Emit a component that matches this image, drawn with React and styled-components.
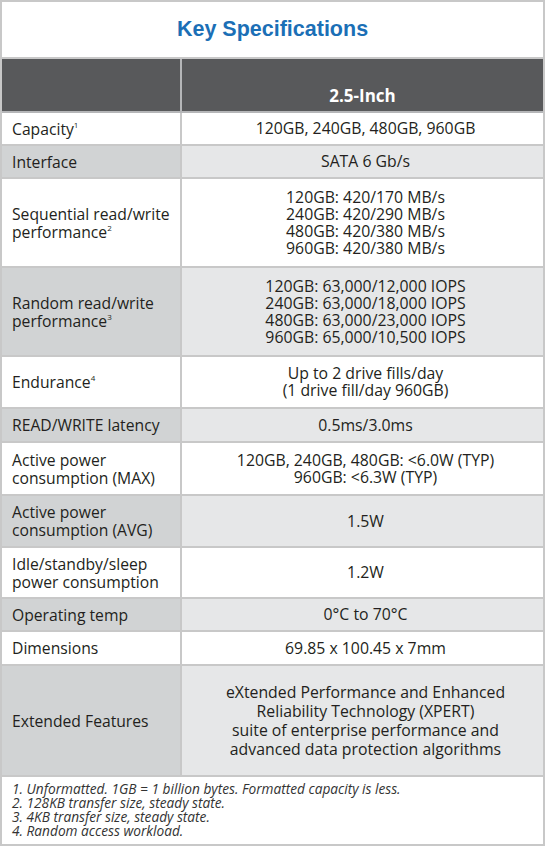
import React from "react";
import styled, { createGlobalStyle } from "styled-components";

const GlobalStyle = createGlobalStyle`
  html, body {
    margin: 0;
    padding: 0;
    background: #ffffff;
  }
  body {
    font-family: "Open Sans", "Noto Sans", sans-serif;
    color: #231f20;
  }
`;

const Sheet = styled.div`
  width: 545px;
  height: 846px;
  box-sizing: border-box;
  border: 2px solid #c8c8c8;
  display: flex;
  flex-direction: column;
`;

const Title = styled.h1`
  margin: 0;
  height: 55px;
  border-bottom: 2px solid #c8c8c8;
  display: flex;
  align-items: center;
  justify-content: center;
  font-family: "Liberation Sans", Arial, sans-serif;
  font-weight: 700;
  font-size: 21.5px;
  color: #1b6fb6;
`;

const Row = styled.div`
  display: grid;
  grid-template-columns: 180px 1fr;
  height: ${(props) => props.$h}px;
  box-sizing: border-box;
  border-bottom: 2px solid #c8c8c8;
`;

const HeaderRow = styled(Row)`
  background: #58595b;
  border-bottom-color: #b5b6b8;
`;

const HeaderCell = styled.div`
  border-right: 2px solid #b5b6b8;
  &:last-child {
    border-right: none;
  }
  display: flex;
  align-items: flex-end;
  justify-content: center;
  padding-bottom: 4px;
  color: #ffffff;
  font-weight: 700;
  font-size: 17px;
`;

const Label = styled.div`
  box-sizing: border-box;
  border-right: 2px solid #c8c8c8;
  background: ${(props) => (props.$shade ? "#d1d3d4" : "#ffffff")};
  display: flex;
  align-items: center;
  padding: 0 6px 0 10px;
  font-size: 15.7px;
  line-height: 18px;
`;

const Value = styled.div`
  background: ${(props) => (props.$shade ? "#e6e7e8" : "#ffffff")};
  display: flex;
  align-items: center;
  justify-content: center;
  text-align: center;
  font-size: 15.8px;
  line-height: ${(props) => props.$lh || 17}px;
  padding-left: 6px;
`;

const Sup = styled.sup`
  font-size: 8px;
  line-height: 0;
  vertical-align: 7px;
`;

const Notes = styled.div`
  flex: 1;
  padding: 5px 10px 0 10px;
  font-style: italic;
  font-size: 13.7px;
  line-height: 14px;
  color: #333;
`;

const rows = [
  { label: ["Capacity", "1"], value: ["120GB, 240GB, 480GB, 960GB"], h: 33 },
  { label: ["Interface"], value: ["SATA 6 Gb/s"], h: 33, shade: true },
  {
    label: ["Sequential read/write performance", "2"],
    value: [
      "120GB: 420/170 MB/s",
      "240GB: 420/290 MB/s",
      "480GB: 420/380 MB/s",
      "960GB: 420/380 MB/s",
    ],
    h: 89,
  },
  {
    label: ["Random read/write performance", "3"],
    value: [
      "120GB: 63,000/12,000 IOPS",
      "240GB: 63,000/18,000 IOPS",
      "480GB: 63,000/23,000 IOPS",
      "960GB: 65,000/10,500 IOPS",
    ],
    h: 89,
    shade: true,
  },
  {
    label: ["Endurance", "4"],
    value: ["Up to 2 drive fills/day", "(1 drive fill/day 960GB)"],
    h: 52,
  },
  { label: ["READ/WRITE latency"], value: ["0.5ms/3.0ms"], h: 34, shade: true },
  {
    label: ["Active power consumption (MAX)"],
    value: ["120GB, 240GB, 480GB: <6.0W (TYP)", "960GB: <6.3W (TYP)"],
    h: 53,
  },
  {
    label: ["Active power consumption (AVG)"],
    value: ["1.5W"],
    h: 52,
    shade: true,
  },
  {
    label: ["Idle/standby/sleep power consumption"],
    value: ["1.2W"],
    h: 51,
  },
  { label: ["Operating temp"], value: ["0°C to 70°C"], h: 33, shade: true },
  { label: ["Dimensions"], value: ["69.85 x 100.45 x 7mm"], h: 34 },
  {
    label: ["Extended Features"],
    value: [
      "eXtended Performance and Enhanced",
      "Reliability Technology (XPERT)",
      "suite of enterprise performance and",
      "advanced data protection algorithms",
    ],
    h: 111,
    shade: true,
    lh: 19,
  },
];

const notes = [
  "1. Unformatted. 1GB = 1 billion bytes. Formatted capacity is less.",
  "2. 128KB transfer size, steady state.",
  "3. 4KB transfer size, steady state.",
  "4. Random access workload.",
];

const App = () => (
  <>
    <GlobalStyle />
    <Sheet>
      <Title>Key Specifications</Title>
      <HeaderRow $h={54}>
        <HeaderCell />
        <HeaderCell>2.5-Inch</HeaderCell>
      </HeaderRow>
      {rows.map((row) => (
        <Row key={row.label[0]} $h={row.h}>
          <Label $shade={row.shade}>
            <span>
              {row.label[0]}
              {row.label[1] && <Sup>{row.label[1]}</Sup>}
            </span>
          </Label>
          <Value $shade={row.shade} $lh={row.lh}>
            <div>
              {row.value.map((line) => (
                <div key={line}>{line}</div>
              ))}
            </div>
          </Value>
        </Row>
      ))}
      <Notes>
        {notes.map((n) => (
          <div key={n}>{n}</div>
        ))}
      </Notes>
    </Sheet>
  </>
);

export default App;
